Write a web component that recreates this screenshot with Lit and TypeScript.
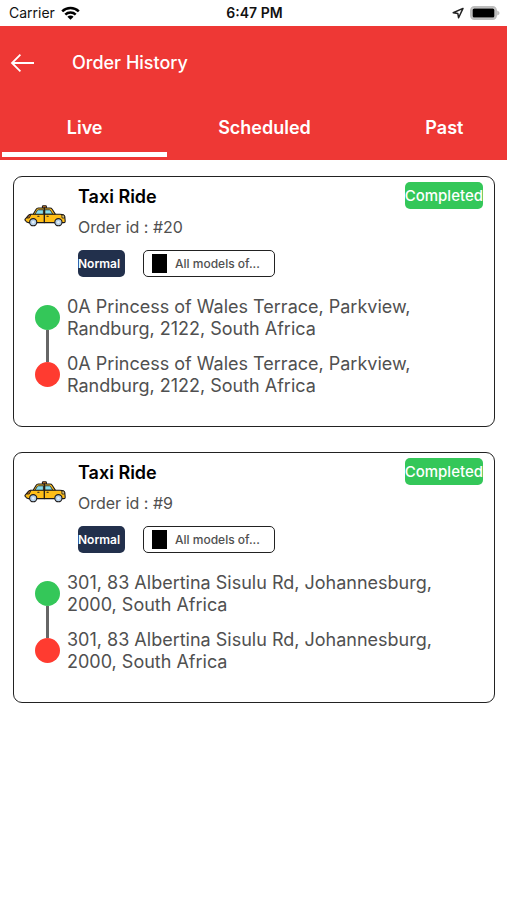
import { LitElement, html, svg, css } from "lit";
import { customElement, property, state } from "lit/decorators.js";
import { classMap } from "lit/directives/class-map.js";

interface Order {
  id: number;
  kind: string;
  status: string;
  model: string;
  pickup: string;
  dropoff: string;
}

const ORDERS: Order[] = [
  {
    id: 20,
    kind: "Normal",
    status: "Completed",
    model: "All models of...",
    pickup: "0A Princess of Wales Terrace, Parkview, Randburg, 2122, South Africa",
    dropoff: "0A Princess of Wales Terrace, Parkview, Randburg, 2122, South Africa",
  },
  {
    id: 9,
    kind: "Normal",
    status: "Completed",
    model: "All models of...",
    pickup: "301, 83 Albertina Sisulu Rd, Johannesburg, 2000, South Africa",
    dropoff: "301, 83 Albertina Sisulu Rd, Johannesburg, 2000, South Africa",
  },
];

const taxi = svg`
  <g stroke="#1d1a1a" stroke-width="1.1" stroke-linejoin="round" stroke-linecap="round">
    <path d="M18.4 3.2V1.4Q18.4.7 19.2.7h2.4q.8 0 .8.7v1.8z" fill="#d9822b"/>
    <path d="M9 9.6 12 4.4Q12.8 3 14.4 3H26Q27.4 3 28.2 4.2L31.6 9.6z" fill="#ffc01e"/>
    <path d="M11 9.2 13.2 5.6Q13.6 4.8 14.4 4.8H19.4V9.2z" fill="#86dcec" stroke-width=".8"/>
    <path d="M21.2 4.8H25.4Q26.2 4.8 26.6 5.6L28.8 9.2H21.2z" fill="#86dcec" stroke-width=".8"/>
    <path d="M1.4 15.4Q.6 15 1.2 14.2L4.4 10.4Q5.4 9.2 7 9.2H36Q40.6 9.2 40.8 11.6L41.2 16.2Q41.2 17.6 40 17.6H4.4Q2 17.2 1.4 15.4z" fill="#ffbe18"/>
    <path d="M20.3 3V17.6" fill="none" stroke-width="1.3"/>
    <path d="M13.8 11.2h1.2M23 11.2h1.2" fill="none"/>
    <path d="M5.2 10 2.8 13h2.4l1.8-3.4z" fill="#c9761f" stroke-width=".8"/>
    <path d="M38.2 10h1.8l.6 3h-2.2z" fill="#f6dc8c" stroke-width=".8"/>
    <circle cx="9.2" cy="17.2" r="3.6" fill="#b4cfe8"/>
    <circle cx="34.4" cy="17.2" r="3.6" fill="#b4cfe8"/>
    <circle cx="9.2" cy="17.2" r="1.2" fill="#e6f0fa" stroke="none"/>
    <circle cx="34.4" cy="17.2" r="1.2" fill="#e6f0fa" stroke="none"/>
  </g>`;

@customElement("status-bar")
export class StatusBar extends LitElement {
  static styles = css`
    :host {
      display: grid;
      grid-template-columns: 1fr auto 1fr;
      align-items: center;
      height: 26px;
      padding: 0 7px 0 9px;
      background: #fff;
      color: #111;
      font-size: 14px;
      line-height: 20px;
    }
    .left,
    .right {
      display: flex;
      align-items: center;
      gap: 6px;
    }
    .right {
      justify-content: flex-end;
    }
    .time {
      font-weight: 600;
    }
    svg {
      display: block;
    }
  `;

  render() {
    return html`
      <div class="left">
        <span>Carrier</span>
        <svg width="19" height="14" viewBox="0 0 19 14" aria-label="Wi-Fi">
          <g fill="none" stroke="#000" stroke-width="2.5">
            <path d="M1.2 5.4a11.8 11.8 0 0 1 16.6 0" />
            <path d="M4.3 8.6a7.4 7.4 0 0 1 10.4 0" />
          </g>
          <path d="M9.5 13.8 6.4 10.7a4.4 4.4 0 0 1 6.2 0z" />
        </svg>
      </div>
      <span class="time">6:47 PM</span>
      <div class="right">
        <svg width="12" height="12" viewBox="0 0 12 12" aria-label="Location">
          <path d="M11 1.4 1.2 5.8l4.6.6.8 4.4z" fill="none" stroke="#222" stroke-width="1.5" stroke-linejoin="round" />
        </svg>
        <svg width="30" height="14" viewBox="0 0 30 14" aria-label="Battery">
          <rect x="1" y="1" width="25" height="12" rx="3.4" fill="#e4e4e4" stroke="#bdbdbd" stroke-width="2" />
          <rect x="2.6" y="2.4" width="21.8" height="9.2" rx="1.6" />
          <path d="M27.2 4.4q2.4 1 2.4 2.6t-2.4 2.6z" fill="#bdbdbd" />
        </svg>
      </div>
    `;
  }
}

@customElement("order-card")
export class OrderCard extends LitElement {
  @property({ attribute: false }) order!: Order;

  static styles = css`
    :host {
      display: block;
      border: 1px solid #222;
      border-radius: 9px;
      padding: 5px 11px 29px 10px;
      color: #505050;
    }
    .head {
      display: flex;
      align-items: flex-start;
      gap: 12px;
    }
    .taxi {
      display: block;
      flex: none;
      margin-top: 23px;
    }
    .info {
      flex: 1;
      min-width: 0;
      padding-top: 3px;
    }
    h2 {
      margin: 0 0 8px;
      color: #000;
      font-size: 18px;
      line-height: 24px;
      font-weight: 600;
    }
    .id {
      margin: 0 0 13px;
      font-size: 16px;
      line-height: 20px;
    }
    .chips {
      display: flex;
      gap: 18px;
    }
    .kind,
    .model,
    .status {
      display: flex;
      align-items: center;
      box-sizing: border-box;
      height: 27px;
      border-radius: 5px;
      white-space: nowrap;
    }
    .kind {
      width: 47px;
      background: #22304c;
      color: #fff;
      font-size: 12px;
      font-weight: 600;
    }
    .model {
      width: 132px;
      gap: 8px;
      padding-left: 8px;
      border: 1px solid #222;
      font-size: 12px;
      font-weight: 500;
    }
    .swatch {
      width: 15px;
      height: 19px;
      background: #000;
    }
    .status {
      background: #34c759;
      color: #fff;
      font-size: 15px;
      font-weight: 500;
    }
    .route {
      display: flex;
      gap: 7px;
      margin-top: 19px;
      padding-left: 11px;
    }
    .rail {
      display: flex;
      flex-direction: column;
      align-items: center;
      padding: 9px 0 10px;
    }
    .dot {
      width: 25px;
      height: 25px;
      border-radius: 50%;
      background: #34c759;
    }
    .dot.end {
      background: #ff3b30;
    }
    .line {
      flex: 1;
      width: 3px;
      background: #666;
    }
    .stops {
      display: flex;
      flex-direction: column;
      gap: 13px;
      max-width: 380px;
      font-size: 18px;
      line-height: 22px;
    }
    .stops p {
      margin: 0;
    }
  `;

  render() {
    const o = this.order;
    return html`
      <div class="head">
        <svg class="taxi" width="42" height="22" viewBox="0 0 42 22" aria-hidden="true">${taxi}</svg>
        <div class="info">
          <h2>Taxi Ride</h2>
          <p class="id">Order id : #${o.id}</p>
          <div class="chips">
            <span class="kind">${o.kind}</span>
            <span class="model"><span class="swatch"></span>${o.model}</span>
          </div>
        </div>
        <span class="status">${o.status}</span>
      </div>
      <div class="route">
        <div class="rail">
          <span class="dot"></span>
          <span class="line"></span>
          <span class="dot end"></span>
        </div>
        <div class="stops">
          <p>${o.pickup}</p>
          <p>${o.dropoff}</p>
        </div>
      </div>
    `;
  }
}

@customElement("app-root")
export class AppRoot extends LitElement {
  @state() private active = "Live";

  static styles = css`
    :host {
      display: block;
      min-height: 100vh;
      background: #fff;
      font-family: Inter, Roboto, "Liberation Sans", sans-serif;
    }
    header {
      overflow: hidden;
      background: #ee3835;
      color: #fff;
    }
    .bar {
      display: flex;
      align-items: center;
      gap: 36px;
      height: 74px;
      padding-left: 10px;
    }
    h1 {
      margin: 0;
      font-size: 18px;
      line-height: 24px;
      font-weight: 500;
    }
    button {
      margin: 0;
      padding: 0;
      border: 0;
      background: none;
      color: inherit;
      font: inherit;
      cursor: pointer;
    }
    .back svg {
      display: block;
    }
    .tabs {
      display: grid;
      grid-template-columns: 8fr 9fr 8fr;
      width: calc(100% + 22px);
      height: 60px;
    }
    .tab {
      box-sizing: border-box;
      margin: 0 2px 3px;
      padding-top: 3px;
      border-bottom: 5px solid transparent;
      font-size: 18px;
      line-height: 24px;
      font-weight: 600;
    }
    .tab.active {
      border-bottom-color: #fff;
    }
    main {
      display: flex;
      flex-direction: column;
      gap: 25px;
      padding: 16px 12px 16px 13px;
    }
  `;

  render() {
    return html`
      <status-bar></status-bar>
      <header>
        <div class="bar">
          <button class="back" aria-label="Back">
            <svg width="26" height="20" viewBox="0 0 26 20" fill="none" stroke="#fff" stroke-width="1.8">
              <path d="M24 10H2M10.4 1.6 2 10l8.4 8.4" />
            </svg>
          </button>
          <h1>Order History</h1>
        </div>
        <div class="tabs" role="tablist">
          ${["Live", "Scheduled", "Past"].map(
            (name) => html`<button
              class=${classMap({ tab: true, active: name === this.active })}
              role="tab"
              aria-selected=${name === this.active}
              @click=${() => (this.active = name)}
            >${name}</button>`
          )}
        </div>
      </header>
      <main>${ORDERS.map((o) => html`<order-card .order=${o}></order-card>`)}</main>
    `;
  }
}
